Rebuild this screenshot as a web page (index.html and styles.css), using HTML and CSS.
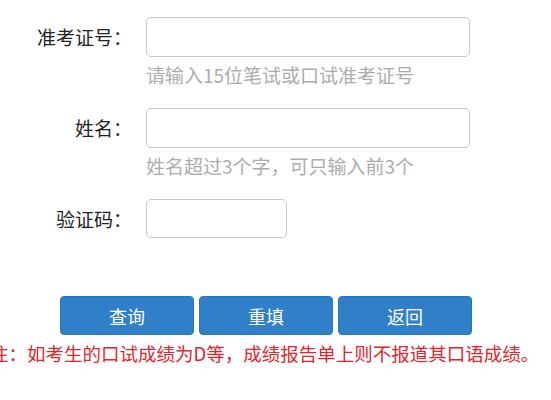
FILE: index.html
```html
<!DOCTYPE html>
<html lang="zh-CN">
  <head>
    <meta charset="UTF-8" />
    <title>成绩查询</title>
    <link rel="stylesheet" href="styles.css">
  </head>
  <body>
    <form class="query-form">
      <div class="field">
        <label for="examNo">准考证号：</label>
        <input type="text" id="examNo" class="text-input" />
      </div>
      <p class="hint">请输入15位笔试或口试准考证号</p>

      <div class="field">
        <label for="name">姓名：</label>
        <input type="text" id="name" class="text-input" />
      </div>
      <p class="hint">姓名超过3个字，可只输入前3个</p>

      <div class="field field-code">
        <label for="code">验证码：</label>
        <input type="text" id="code" class="text-input code-input" />
      </div>

      <div class="actions">
        <button type="button">查询</button>
        <button type="reset">重填</button>
        <button type="button">返回</button>
      </div>

      <p class="note">注：如考生的口试成绩为D等，成绩报告单上则不报道其口语成绩。</p>
    </form>
  </body>
</html>
```

FILE: styles.css
```css
body {
  margin: 0;
  background: #fff;
  font-family: "Noto Sans CJK SC", "Noto Sans", sans-serif;
  color: #333;
  overflow: hidden;
}
.query-form {
  padding-top: 17px;
}
.field {
  display: grid;
  grid-template-columns: 132px auto;
  column-gap: 14px;
  align-items: center;

  label {
    text-align: right;
    font-size: 19px;
    line-height: 26px;
    color: #222;
  }
}
.text-input {
  width: 324px;
  height: 40px;
  box-sizing: border-box;
  border: 1px solid #c6c6c6;
  border-radius: 5px;
  background: #fff;
  font: inherit;
}
.code-input {
  width: 141px;
  height: 39px;
}
.hint {
  margin: 5px 0 20px 146px;
  font-size: 19px;
  line-height: 26px;
  color: #acacac;
}
.field-code {
  margin-top: 1px;
}
.actions {
  display: flex;
  gap: 5px;
  margin: 58px 0 0 60px;

  button {
    width: 134px;
    height: 39px;
    border: 1px solid #2a76bb;
    border-radius: 4px;
    background: #2f80c8;
    color: #fff;
    font-family: inherit;
    font-size: 18px;
  }
}
.note {
  margin: 5px 0 0 -10px;
  white-space: nowrap;
  font-size: 18.5px;
  line-height: 26px;
  color: #e0262c;
}
```
